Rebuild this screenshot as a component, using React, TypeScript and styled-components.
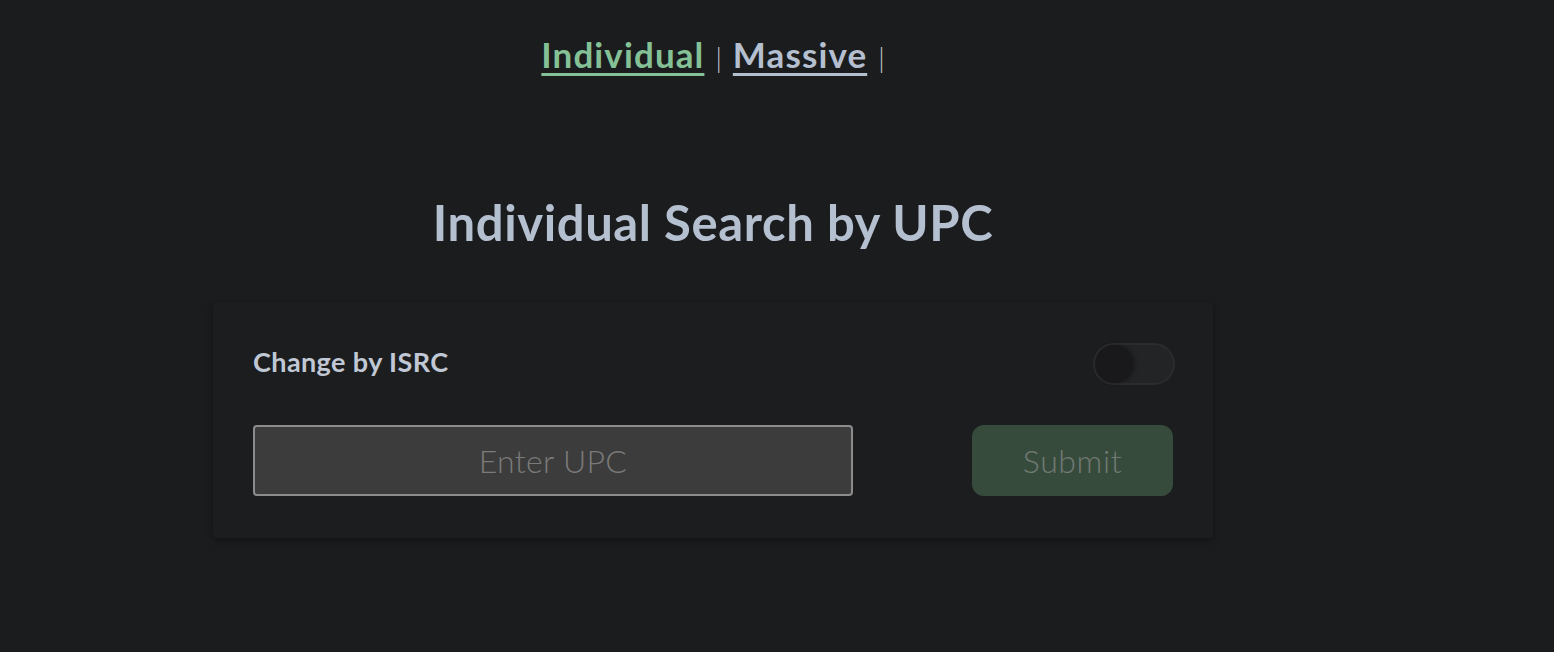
import * as React from 'react';
import { useState } from 'react';
import styled, { createGlobalStyle } from 'styled-components';

const GlobalStyle = createGlobalStyle`
  html, body {
    margin: 0;
    padding: 0;
    background: #1b1c1e;
    font-family: Lato, "Noto Sans", sans-serif;
  }
`;

const Page = styled.div`
  min-height: 652px;
  padding-right: 128px;
  display: flex;
  flex-direction: column;
  align-items: center;
  box-sizing: border-box;
`;

const Nav = styled.nav`
  display: flex;
  align-items: baseline;
  gap: 11px;
  padding-top: 33px;
  height: 52px;
`;

const NavLink = styled.a<{ $active?: boolean }>`
  font-size: 35px;
  font-weight: 700;
  letter-spacing: 1.1px;
  color: ${p => (p.$active ? '#85c196' : '#b4bfcf')};
  text-decoration: underline;
  text-decoration-thickness: 3px;
  text-underline-offset: 5px;
  cursor: pointer;
`;

const Divider = styled.span`
  font-size: 27px;
  font-weight: 300;
  color: #c4ccd8;
`;

const Title = styled.h1`
  margin: 0;
  margin-top: 108px;
  font-size: 49px;
  font-weight: 700;
  color: #b4bfcf;
  letter-spacing: 0.6px;
`;

const Card = styled.section`
  margin-top: 51px;
  width: 1000px;
  box-sizing: border-box;
  padding: 41px 40px 42px 40px;
  background: #1c1d1f;
  box-shadow: 0 2px 6px rgba(0, 0, 0, 0.35);
  border-radius: 4px;
  display: flex;
  flex-direction: column;
  gap: 40px;
`;

const Row = styled.div`
  display: flex;
  align-items: center;
  justify-content: space-between;
`;

const Label = styled.span`
  font-size: 27px;
  font-weight: 700;
  letter-spacing: 0.4px;
  color: #c0c8d5;
  padding-bottom: 5px;
`;

const Switch = styled.button<{ $on: boolean }>`
  width: 82px;
  height: 42px;
  margin-right: -2px;
  border-radius: 21px;
  border: 2px solid #2b2c2e;
  background: #232426;
  padding: 0;
  display: flex;
  justify-content: ${p => (p.$on ? 'flex-end' : 'flex-start')};
  align-items: center;
  cursor: pointer;
  box-sizing: border-box;
`;

const Thumb = styled.span`
  width: 38px;
  height: 38px;
  border-radius: 50%;
  background: #19191b;
  box-shadow: 2px 0 4px rgba(0, 0, 0, 0.3);
`;

const Input = styled.input`
  width: 600px;
  height: 71px;
  box-sizing: border-box;
  background: #3c3c3c;
  border: 2px solid #8c8c8c;
  border-radius: 4px;
  font-family: Lato, "Noto Sans", sans-serif;
  font-size: 32px;
  font-weight: 300;
  letter-spacing: 0.3px;
  color: #ddd;
  text-align: center;
  outline: none;

  &::placeholder {
    color: #7a7a7a;
  }
`;

const SubmitButton = styled.button`
  width: 201px;
  height: 71px;
  border: none;
  border-radius: 12px;
  background: #374b3d;
  color: #717a73;
  font-family: Lato, "Noto Sans", sans-serif;
  font-size: 32px;
  font-weight: 300;
  letter-spacing: 0.6px;
  cursor: pointer;
`;

export default function App() {
  const [isrc, setIsrc] = useState(false);
  const [value, setValue] = useState('');

  return (
    <>
      <GlobalStyle />
      <Page>
        <Nav>
          <NavLink $active>Individual</NavLink>
          <Divider>|</Divider>
          <NavLink>Massive</NavLink>
          <Divider>|</Divider>
        </Nav>
        <Title>Individual Search by {isrc ? 'ISRC' : 'UPC'}</Title>
        <Card>
          <Row>
            <Label>Change by {isrc ? 'UPC' : 'ISRC'}</Label>
            <Switch $on={isrc} onClick={() => setIsrc(!isrc)}>
              <Thumb />
            </Switch>
          </Row>
          <Row>
            <Input
              placeholder={isrc ? 'Enter ISRC' : 'Enter UPC'}
              value={value}
              onChange={e => setValue(e.target.value)}
            />
            <SubmitButton>Submit</SubmitButton>
          </Row>
        </Card>
      </Page>
    </>
  );
}
